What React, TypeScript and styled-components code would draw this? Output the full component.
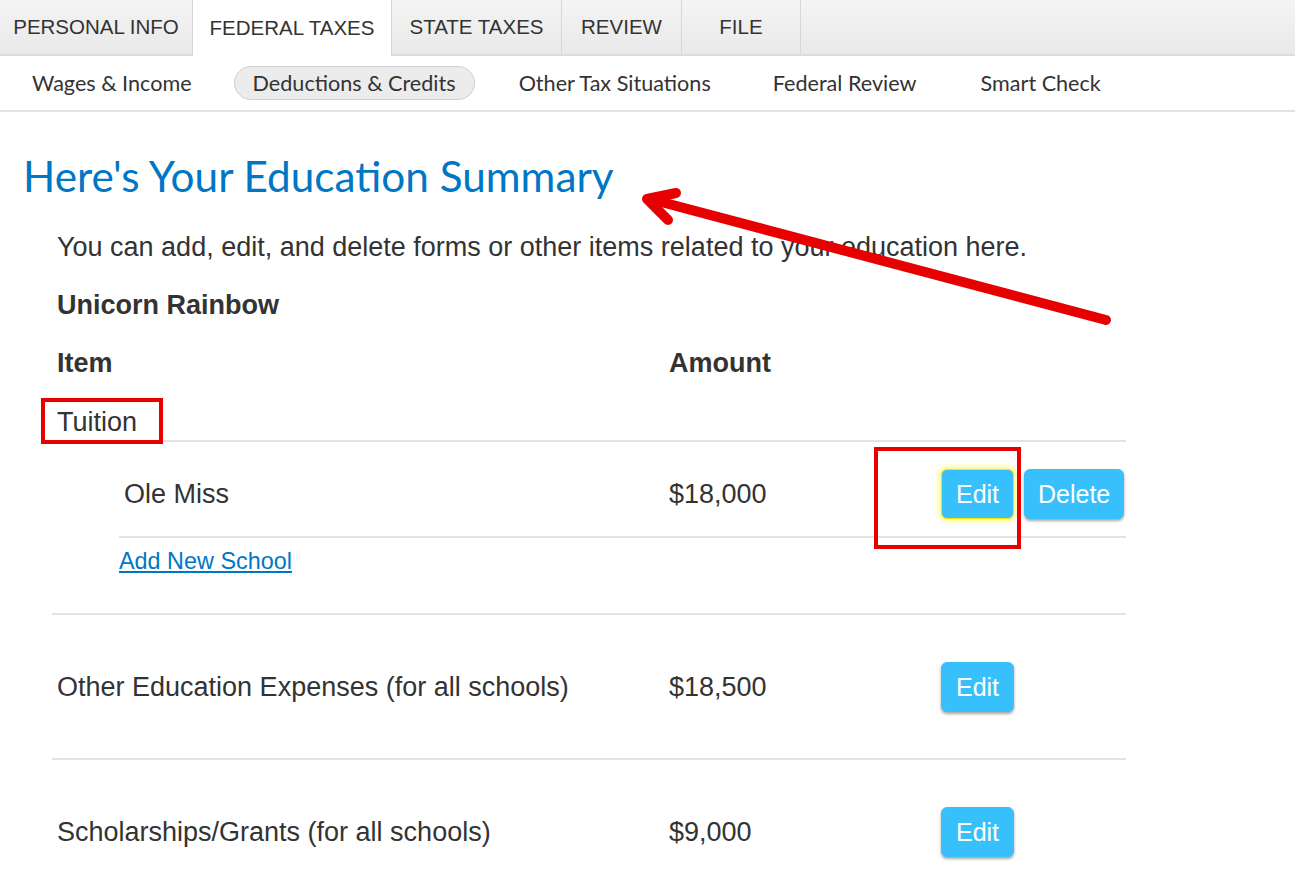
import React from "react";
import styled, { createGlobalStyle, css } from "styled-components";

const Global = createGlobalStyle`
  html, body { margin: 0; padding: 0; background: #fff; }
  body { font-family: "Liberation Sans", Arial, sans-serif; color: #333; }
  * { box-sizing: border-box; }
`;

const Page = styled.div`
  position: relative;
  width: 1295px;
  min-height: 879px;
  overflow: hidden;
`;

const TopNav = styled.nav`
  display: flex;
  height: 56px;
  background: linear-gradient(#f4f4f4, #e9e9e9);
  border-bottom: 2px solid #dcdcdc;
`;

const TopTab = styled.div<{ $w: number; $active?: boolean }>`
  width: ${(p) => p.$w}px;
  display: flex;
  align-items: center;
  justify-content: center;
  font-family: "Liberation Sans", Arial, sans-serif;
  font-size: 20.5px;
  color: #333;
  border-right: 1px solid #d6d6d6;
  ${(p) =>
    p.$active &&
    css`
      background: #fff;
      margin-bottom: -2px;
    `}
`;

const SubNav = styled.nav`
  display: flex;
  align-items: center;
  height: 56px;
  padding-left: 32px;
  border-bottom: 2px solid #e2e2e2;
`;

const SubItem = styled.div<{ $active?: boolean; $mr: number }>`
  font-family: Lato, "Open Sans", sans-serif;
  font-size: 21.6px;
  color: #333;
  height: 34px;
  display: flex;
  align-items: center;
  white-space: nowrap;
  margin-right: ${(p) => p.$mr}px;
  ${(p) =>
    p.$active &&
    css`
      padding: 0 18px;
      border-radius: 17px;
      background: #ececec;
      border: 1px solid #cfcfcf;
    `}
`;

const Main = styled.main`
  padding: 40px 0 0 23px;
`;

const Title = styled.h1`
  margin: 0;
  font-family: Lato, "Open Sans", sans-serif;
  font-weight: 400;
  font-size: 42.3px;
  line-height: 48px;
  color: #0077c5;
`;

const Body = styled.section`
  padding-left: 29px;
  width: 1103px;
`;

const Intro = styled.p`
  margin: 32px 0 0 5px;
  font-size: 27px;
  line-height: 30px;
`;

const Owner = styled.h2`
  margin: 28px 0 0 5px;
  font-size: 27px;
  line-height: 30px;
  font-weight: 700;
`;

const Grid = styled.div<{ $first: number }>`
  display: grid;
  grid-template-columns: ${(p) => p.$first}px 272px 1fr;
  align-items: center;
  font-size: 27px;
  line-height: 30px;
`;

const HeadRow = styled(Grid)`
  margin-top: 28px;
  padding-left: 5px;
  font-weight: 700;
`;

const SectionLabel = styled.div`
  margin-top: 29px;
  padding: 0 0 3px 5px;
  font-size: 27px;
  line-height: 30px;
  border-bottom: 2px solid #e3e3e3;
`;

const SubRow = styled(Grid)`
  margin-left: 67px;
  padding: 27px 0 17px 5px;
  border-bottom: 2px solid #e3e3e3;
`;

const ItemRow = styled(Grid)`
  padding: 47px 0 46px 5px;
  border-bottom: 2px solid #e3e3e3;
`;

const LastRow = styled(ItemRow)`
  border-bottom: none;
`;

const LinkWrap = styled.div`
  padding: 10px 0 39px 67px;
  border-bottom: 2px solid #e3e3e3;
`;

const Link = styled.a`
  font-size: 23.4px;
  line-height: 26px;
  color: #0077c5;
  text-decoration: underline;
`;

const Actions = styled.div`
  display: flex;
  gap: 10px;
`;

const Btn = styled.button<{ $focus?: boolean }>`
  height: 50px;
  padding: 0 13px;
  min-width: 73px;
  border: 1px solid #38c0fc;
  border-radius: 6px;
  background: #38c0fc;
  color: #fff;
  font-family: "Liberation Sans", Arial, sans-serif;
  font-size: 25px;
  box-shadow: 0 2px 3px rgba(0, 0, 0, 0.35);
  ${(p) =>
    p.$focus &&
    css`
      border-color: #f5e800;
      box-shadow: 0 0 5px 2px rgba(255, 240, 0, 0.55);
    `}
`;

const Overlay = styled.svg`
  position: absolute;
  left: 0;
  top: 0;
  pointer-events: none;
`;

export default function App() {
  return (
    <Page>
      <Global />
      <TopNav>
        <TopTab $w={193}>PERSONAL INFO</TopTab>
        <TopTab $w={199} $active>FEDERAL TAXES</TopTab>
        <TopTab $w={170}>STATE TAXES</TopTab>
        <TopTab $w={120}>REVIEW</TopTab>
        <TopTab $w={119}>FILE</TopTab>
      </TopNav>
      <SubNav>
        <SubItem $mr={42}>Wages &amp; Income</SubItem>
        <SubItem $mr={44} $active>Deductions &amp; Credits</SubItem>
        <SubItem $mr={62}>Other Tax Situations</SubItem>
        <SubItem $mr={64}>Federal Review</SubItem>
        <SubItem $mr={0}>Smart Check</SubItem>
      </SubNav>
      <Main>
        <Title>Here's Your Education Summary</Title>
        <Body>
          <Intro>You can add, edit, and delete forms or other items related to your education here.</Intro>
          <Owner>Unicorn Rainbow</Owner>
          <HeadRow $first={612}>
            <span>Item</span>
            <span>Amount</span>
            <span />
          </HeadRow>
          <SectionLabel>Tuition</SectionLabel>
          <SubRow $first={545}>
            <span>Ole Miss</span>
            <span>$18,000</span>
            <Actions>
              <Btn $focus>Edit</Btn>
              <Btn>Delete</Btn>
            </Actions>
          </SubRow>
          <LinkWrap>
            <Link href="#">Add New School</Link>
          </LinkWrap>
          <ItemRow $first={612}>
            <span>Other Education Expenses (for all schools)</span>
            <span>$18,500</span>
            <Actions>
              <Btn>Edit</Btn>
            </Actions>
          </ItemRow>
          <LastRow $first={612}>
            <span>Scholarships/Grants (for all schools)</span>
            <span>$9,000</span>
            <Actions>
              <Btn>Edit</Btn>
            </Actions>
          </LastRow>
        </Body>
      </Main>
      <Overlay width="1295" height="879" viewBox="0 0 1295 879">
        <rect x="43" y="400" width="118" height="42" fill="none" stroke="#e60000" strokeWidth="4" />
        <rect x="876" y="449" width="143" height="98" fill="none" stroke="#e60000" strokeWidth="4" />
        <g stroke="#e60000" strokeWidth="10" strokeLinecap="round" strokeLinejoin="round" fill="none">
          <line x1="1106" y1="320" x2="650" y2="199" />
          <polyline points="676,193 647,199 668,220" />
        </g>
      </Overlay>
    </Page>
  );
}
